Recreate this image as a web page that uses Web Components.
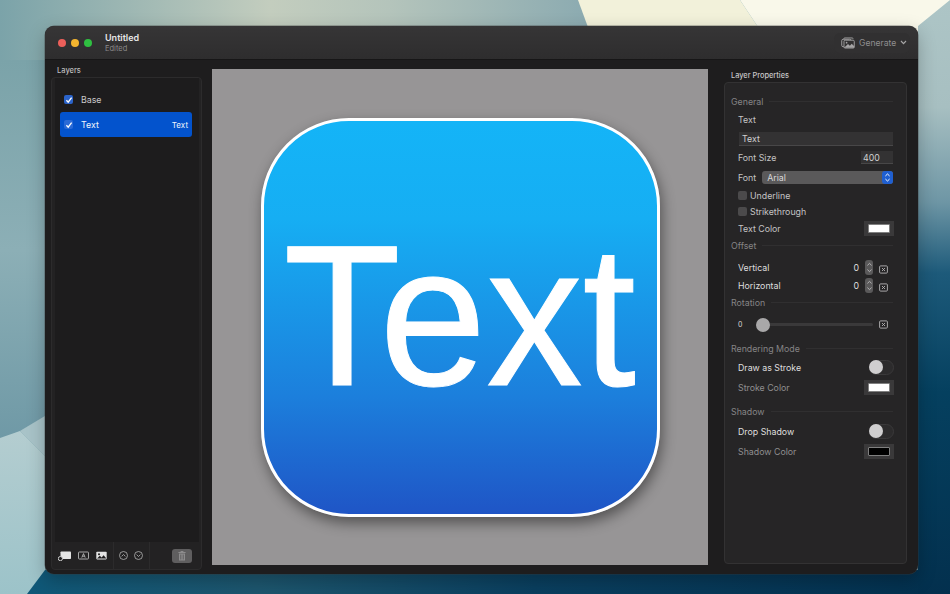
<!DOCTYPE html>
<html>
<head>
<meta charset="utf-8">
<title>Icon Generator</title>
<style>
    html, body {
        margin: 0;
        height: 100%;
        overflow: hidden;
    }
    body {
        font-family: Inter, "Liberation Sans", sans-serif;
    }
</style>
</head>
<body>
<desk-top>
    <app-window>
        <title-bar slot="title"></title-bar>
        <layers-panel slot="left">
            <layer-row checked>Base</layer-row>
            <layer-row checked selected tag="Text">Text</layer-row>
        </layers-panel>
        <icon-canvas slot="center"></icon-canvas>
        <props-panel slot="right"></props-panel>
    </app-window>
</desk-top>

<script>
// Wallpaper, the window sits on it like on a real desktop
class DeskTop extends HTMLElement {
    constructor() {
        super();
        this.attachShadow({ mode: "open" });
    }

    connectedCallback() {
        this.shadowRoot.innerHTML = `
        <style>
            :host {
                display: block;
                position: relative;
                width: 950px;
                height: 594px;
                overflow: hidden;
                background: #0a3e5e;
            }
            svg {
                position: absolute;
                inset: 0;
            }
            ::slotted(app-window) {
                position: absolute;
                left: 45px;
                top: 26px;
            }
        </style>
        <svg width="950" height="594" viewBox="0 0 950 594">
            <defs>
                <linearGradient id="top" x1="0" x2="600" y1="0" y2="0" gradientUnits="userSpaceOnUse">
                    <stop offset="0" stop-color="#7ba3a9"/>
                    <stop offset="0.45" stop-color="#c3cdbe"/>
                    <stop offset="0.65" stop-color="#b4c4bb"/>
                    <stop offset="1" stop-color="#89a9b0"/>
                </linearGradient>
                <linearGradient id="right" x1="0" x2="0" y1="0" y2="1">
                    <stop offset="0" stop-color="#adc5c6"/>
                    <stop offset="0.18" stop-color="#a7bfc1"/>
                    <stop offset="0.34" stop-color="#6e96a5"/>
                    <stop offset="0.46" stop-color="#1d5a7a"/>
                    <stop offset="0.66" stop-color="#05405f"/>
                    <stop offset="1" stop-color="#03304e"/>
                </linearGradient>
                <linearGradient id="left" x1="0" x2="0" y1="0" y2="1">
                    <stop offset="0" stop-color="#7ba3a9"/>
                    <stop offset="0.5" stop-color="#8cafb6"/>
                    <stop offset="1" stop-color="#6f99a6"/>
                </linearGradient>
                <linearGradient id="pale" x1="0" x2="0" y1="0" y2="1">
                    <stop offset="0" stop-color="#b4cdd0"/>
                    <stop offset="1" stop-color="#9cc3c9"/>
                </linearGradient>
                <linearGradient id="bottom" x1="0" x2="1" y1="0" y2="0">
                    <stop offset="0" stop-color="#0f5878"/>
                    <stop offset="0.25" stop-color="#1d566e"/>
                    <stop offset="0.55" stop-color="#0a3f5f"/>
                    <stop offset="1" stop-color="#03304e"/>
                </linearGradient>
            </defs>
            <rect width="950" height="594" fill="url(#left)"/>
            <rect width="600" height="60" fill="url(#top)"/>
            <path d="M0 60V440L20 431L45 416V60Z" fill="url(#left)"/>
            <path d="M0 438L20 431L45 456V594H0Z" fill="url(#pale)"/>
            <path d="M20 431L45 416V456Z" fill="#a8c3c8"/>
            <path d="M27 594L45 570H950V594Z" fill="url(#bottom)"/>
            <rect x="918" y="0" width="32" height="594" fill="url(#right)"/>
            <path d="M578 0H740L780 60H600Z" fill="#f2f1da"/>
            <path d="M740 0H950L918 26V60H780Z" fill="#f9f8ea"/>
        </svg>
        <slot></slot>
        `;
    }
}

class AppWindow extends HTMLElement {
    constructor() {
        super();
        this.attachShadow({ mode: "open" });
    }

    connectedCallback() {
        this.shadowRoot.innerHTML = `
        <style>
            :host {
                display: flex;
                flex-direction: column;
                width: 873px;
                height: 548px;
                border-radius: 9px;
                overflow: hidden;
                background: #1e1d1e;
                box-shadow: 0 0 0 0.5px rgba(60, 60, 60, 0.6), 0 6px 18px rgba(0, 0, 0, 0.25);
            }
            .body {
                flex: 1;
                display: flex;
                min-height: 0;
            }
        </style>
        <slot name="title"></slot>
        <div class="body">
            <slot name="left"></slot>
            <slot name="center"></slot>
            <slot name="right"></slot>
        </div>
        `;
    }
}

class TitleBar extends HTMLElement {
    constructor() {
        super();
        this.attachShadow({ mode: "open" });
    }

    connectedCallback() {
        this.shadowRoot.innerHTML = `
        <style>
            :host {
                display: flex;
                align-items: center;
                height: 34px;
                padding: 0 8px 0 13px;
                flex: none;
                background: linear-gradient(180deg, #363536, #2e2d2e);
                border-bottom: 1px solid #171617;
                box-sizing: border-box;
            }
            .lights {
                display: flex;
                gap: 5px;
            }
            .lights i {
                width: 8px;
                height: 8px;
                border-radius: 50%;
            }
            .doc {
                margin-left: 13px;
                display: flex;
                flex-direction: column;
                line-height: 11px;
                padding-top: 1px;
            }
            .doc b {
                font-size: 9px;
                font-weight: 600;
                color: #e6e6e6;
            }
            .doc span {
                font-size: 7.5px;
                color: #8b8a8b;
            }
            .generate {
                margin-left: auto;
                display: flex;
                align-items: center;
                gap: 4px;
                height: 20px;
                width: 76px;
                box-sizing: border-box;
                padding: 0 5px 0 7px;
                border-radius: 6px;
                background: #313031;
                color: #8f8e8f;
                font-size: 8.6px;
            }
            .generate svg {
                flex: none;
            }
        </style>
        <div class="lights">
            <i style="background:#ec5f5a"></i>
            <i style="background:#f4b52f"></i>
            <i style="background:#2fc041"></i>
        </div>
        <div class="doc"><b>Untitled</b><span>Edited</span></div>
        <div class="generate">
            <svg width="14" height="12" viewBox="0 0 15 12" fill="none" stroke="#a5a4a5" stroke-width="1">
                <rect x="0.8" y="2" width="10" height="8" rx="1.5"/>
                <path d="M3 2V1.5A1 1 0 0 1 4 .6H12A1 1 0 0 1 13 1.5" />
                <rect x="3.2" y="3" width="11" height="8.4" rx="1.2" fill="#313031"/>
                <circle cx="6" cy="5.6" r="0.9" fill="#a5a4a5" stroke="none"/>
                <path d="M3.6 10.8L7.5 7L9.5 9L11.5 6.8L14.2 9.6V11.2H3.6Z" fill="#a5a4a5" stroke="none"/>
            </svg>
            <span>Generate</span>
            <svg width="7" height="5" viewBox="0 0 7 5" fill="none" stroke="#a5a4a5" stroke-width="1.2"><path d="M1 1L3.5 3.6L6 1"/></svg>
        </div>
        `;
    }
}

class LayerRow extends HTMLElement {
    constructor() {
        super();
        this.attachShadow({ mode: "open" });
    }

    connectedCallback() {
        const tag = this.getAttribute("tag") || "";
        const sel = this.hasAttribute("selected");
        this.shadowRoot.innerHTML = `
        <style>
            :host {
                display: flex;
                align-items: center;
                height: 25px;
                padding: 0 4px;
                border-radius: 3px;
                font-size: 8.8px;
                color: ${sel ? "#f0f4fb" : "#c9c8c9"};
                background: ${sel ? "#0353cd" : "transparent"};
            }
            .box {
                width: 9px;
                height: 9px;
                border-radius: 2px;
                background: ${sel ? "#2a6ad6" : "#2b63c9"};
                display: flex;
                align-items: center;
                justify-content: center;
                margin-right: 8px;
            }
            .tag {
                margin-left: auto;
                font-size: 8px;
            }
        </style>
        <span class="box">
            <svg width="8" height="8" viewBox="0 0 8 8" fill="none" stroke="#fff" stroke-width="1.3"><path d="M1.4 4.2L3.2 6.2L6.6 1.6"/></svg>
        </span>
        <span><slot></slot></span>
        <span class="tag">${tag}</span>
        `;
    }
}

class LayersPanel extends HTMLElement {
    constructor() {
        super();
        this.attachShadow({ mode: "open" });
    }

    connectedCallback() {
        this.shadowRoot.innerHTML = `
        <style>
            :host {
                display: flex;
                flex-direction: column;
                width: 151px;
                height: 100%;
                margin-left: 6px;
                flex: none;
            }
            h2 {
                margin: 0;
                height: 17px;
                padding-left: 6px;
                font-size: 7.5px;
                line-height: 21px;
                font-weight: 500;
                color: #bdbcbd;
            }
            .box {
                flex: 1;
                margin-bottom: 4px;
                display: flex;
                flex-direction: column;
                border: 1px solid #2c2b2c;
                border-radius: 4px;
                background: #232223;
            }
            .rows {
                flex: 1;
                padding: 9px 7px 9px 5px;
                margin: 0 2px 0 3px;
                background: #1d1c1d;
            }
            .bar {
                display: flex;
                align-items: center;
                height: 27px;
                padding: 0 0 0 6px;
            }
            .bar svg {
                display: block;
            }
            .group {
                display: flex;
                align-items: center;
                height: 100%;
                gap: 7px;
            }
            .group.arrows {
                gap: 6px;
            }
            .sep {
                width: 1px;
                height: 100%;
                background: #2c2b2c;
                margin: 0 5px 0 6px;
            }
            .trash {
                margin-left: 17px;
                width: 20px;
                height: 14px;
                border-radius: 3px;
                background: #5f5e5f;
                display: flex;
                align-items: center;
                justify-content: center;
            }
        </style>
        <h2>Layers</h2>
        <div class="box">
            <div class="rows"><slot></slot></div>
            <div class="bar">
                <div class="group">
                    <svg width="13" height="10" viewBox="0 0 13 10"><rect x="2.5" y="0.5" width="10.5" height="7.6" rx="0.8" fill="#e4e4e4"/><circle cx="2.4" cy="7.6" r="2.1" fill="#1e1d1e" stroke="#cfcfcf" stroke-width="1"/></svg>
                    <svg width="11" height="9" viewBox="0 0 11 9" fill="none" stroke="#c6c6c6" stroke-width="0.8"><rect x="0.5" y="1" width="10" height="7" rx="0.8"/><path d="M3.8 6.6L5.5 2.6L7.2 6.6M4.5 5.2H6.5"/></svg>
                    <svg width="11" height="9" viewBox="0 0 11 9"><rect x="0.3" y="0.8" width="10.4" height="7.6" rx="0.8" fill="#e4e4e4"/><circle cx="3" cy="3.2" r="1" fill="#1e1d1e"/><path d="M1 7.6L3.8 4.8L5.6 6.4L7.6 4.2L10 7V7.6Z" fill="#1e1d1e"/></svg>
                </div>
                <div class="sep"></div>
                <div class="group arrows">
                    <svg width="9" height="9" viewBox="0 0 9 9" fill="none" stroke="#b4b4b4" stroke-width="0.8"><circle cx="4.5" cy="4.5" r="4"/><path d="M2.6 5.4L4.5 3.5L6.4 5.4"/></svg>
                    <svg width="9" height="9" viewBox="0 0 9 9" fill="none" stroke="#b4b4b4" stroke-width="0.8"><circle cx="4.5" cy="4.5" r="4"/><path d="M2.6 3.6L4.5 5.5L6.4 3.6"/></svg>
                </div>
                <div class="sep"></div>
                <div class="trash">
                    <svg width="8" height="10" viewBox="0 0 8 10" fill="#8d8c8d"><rect x="2.6" y="0" width="2.8" height="1.2"/><rect x="0.4" y="1" width="7.2" height="1"/><path d="M1 2.6H7V9.4H1ZM2.2 3.4V8.6H2.9V3.4ZM3.7 3.4V8.6H4.3V3.4ZM5.1 3.4V8.6H5.8V3.4Z" fill-rule="evenodd"/></svg>
                </div>
            </div>
        </div>
        `;
    }
}

class IconCanvas extends HTMLElement {
    constructor() {
        super();
        this.attachShadow({ mode: "open" });
    }

    connectedCallback() {
        this.shadowRoot.innerHTML = `
        <style>
            :host {
                display: flex;
                align-items: center;
                justify-content: center;
                width: 496px;
                height: 496px;
                margin: 9px 16px 0 10px;
                flex: none;
                background: #979596;
            }
            .icon {
                width: 399px;
                height: 399px;
                box-sizing: border-box;
                border: 3px solid #fff;
                border-radius: 88px;
                background: linear-gradient(180deg, #14b4f7 0%, #16aef3 25%, #1c7fdc 70%, #1f55c6 100%);
                box-shadow: 2px 6px 14px rgba(0, 0, 0, 0.45);
                display: flex;
                align-items: center;
                justify-content: center;
                color: #fff;
                font: 197px/1 "Liberation Sans", Arial, sans-serif;
                font-kerning: normal;
            }
            span {
                display: block;
                transform: translateY(-1.5px) scale(0.975, 1.015);
                -webkit-text-stroke: 1px #fff;
            }
        </style>
        <div class="icon"><span>Text</span></div>
        `;
    }
}

class PropRow extends HTMLElement {
    constructor() {
        super();
        this.attachShadow({ mode: "open" });
    }

    connectedCallback() {
        const h = this.getAttribute("h") || 14;
        const m = this.getAttribute("m") || 0;
        this.shadowRoot.innerHTML = `
        <style>
            :host {
                display: flex;
                align-items: center;
                justify-content: space-between;
                height: ${h}px;
                margin-top: ${m}px;
                padding: 0 13px 0 13px;
                font-size: 8.8px;
                color: #c4c3c4;
            }
            :host([dim]) {
                color: #8f8e8f;
            }
            :host([strong]) {
                color: #dfdedf;
            }
        </style>
        <slot></slot>
        `;
    }
}

class PropHead extends HTMLElement {
    constructor() {
        super();
        this.attachShadow({ mode: "open" });
    }

    connectedCallback() {
        this.shadowRoot.innerHTML = `
        <style>
            :host {
                display: flex;
                align-items: center;
                gap: 6px;
                height: 14px;
                margin-top: ${this.getAttribute("m") || 0}px;
                padding: 0 13px 0 6px;
                font-size: 8.8px;
                color: #858485;
            }
            i {
                flex: 1;
                height: 1px;
                background: #302f30;
            }
        </style>
        <slot></slot><i></i>
        `;
    }
}

class ColorWell extends HTMLElement {
    constructor() {
        super();
        this.attachShadow({ mode: "open" });
    }

    connectedCallback() {
        this.shadowRoot.innerHTML = `
        <style>
            :host {
                display: block;
                width: 30px;
                height: 15px;
                box-sizing: border-box;
                padding: 3px 4px;
                background: #3a393a;
                margin-right: -1px;
            }
            div {
                height: 100%;
                box-sizing: border-box;
                border: 1px solid #808080;
                border-radius: 1px;
                background: ${this.getAttribute("color") || "#fff"};
            }
        </style>
        <div></div>
        `;
    }
}

class ToggleSwitch extends HTMLElement {
    constructor() {
        super();
        this.attachShadow({ mode: "open" });
    }

    connectedCallback() {
        this.shadowRoot.innerHTML = `
        <style>
            :host {
                display: block;
                width: 25px;
                height: 15px;
                box-sizing: border-box;
                margin-right: -1px;
                border-radius: 8px;
                background: #2c2b2c;
                border: 1px solid #3a393a;
                position: relative;
            }
            i {
                position: absolute;
                left: -1px;
                top: -1px;
                width: 14px;
                height: 14px;
                border-radius: 50%;
                background: #cfcecf;
            }
        </style>
        <i></i>
        `;
    }
}

class ClearButton extends HTMLElement {
    constructor() {
        super();
        this.attachShadow({ mode: "open" });
    }

    connectedCallback() {
        this.shadowRoot.innerHTML = `
        <style>
            :host {
                display: block;
                line-height: 0;
                margin-top: 3px;
            }
            :host([flat]) {
                margin-top: 0;
            }
        </style>
        <svg width="9" height="9" viewBox="0 0 9 9" fill="none" stroke="#b5b4b5" stroke-width="0.9"><rect x="0.6" y="0.9" width="7.8" height="7.2" rx="1"/><path d="M3 3L6 6M6 3L3 6"/></svg>
        `;
    }
}

class StepperControl extends HTMLElement {
    constructor() {
        super();
        this.attachShadow({ mode: "open" });
    }

    connectedCallback() {
        this.shadowRoot.innerHTML = `
        <style>
            :host {
                display: flex;
                align-items: center;
                justify-content: center;
                width: 8px;
                height: 15px;
                border-radius: 3px;
                background: #5a595a;
            }
        </style>
        <svg width="7" height="13" viewBox="0 0 7 13" fill="none" stroke="#bdbcbd" stroke-width="0.9"><path d="M1.4 4.4L3.5 2.4L5.6 4.4M1.4 8.6L3.5 10.6L5.6 8.6"/></svg>
        `;
    }
}

class PropsPanel extends HTMLElement {
    constructor() {
        super();
        this.attachShadow({ mode: "open" });
    }

    connectedCallback() {
        this.shadowRoot.innerHTML = `
        <style>
            :host {
                display: flex;
                flex-direction: column;
                width: 183px;
                height: 100%;
                flex: none;
            }
            h2 {
                margin: 0;
                height: 22px;
                padding-left: 7px;
                font-size: 7.4px;
                line-height: 31px;
                font-weight: 500;
                color: #c8c7c8;
            }
            .box {
                flex: 1;
                margin-bottom: 10px;
                box-sizing: border-box;
                padding-top: 11.5px;
                border: 1px solid #333233;
                border-radius: 4px;
                background: #262526;
            }
            .input {
                flex: 1;
                height: 13px;
                line-height: 13px;
                padding-left: 3px;
                background: #333233;
                border-bottom: 1px solid #484748;
                margin-left: 1px;
                color: #d0cfd0;
            }
            .small {
                flex: none;
                width: 32px;
                padding: 0 0 0 2px;
                box-sizing: border-box;
            }
            .select {
                flex: 1;
                height: 13px;
                margin: 0 0 0 6px;
                border-radius: 3px;
                background: #5a595a;
                display: flex;
                align-items: center;
                justify-content: space-between;
                padding-left: 5px;
                font-size: 8.8px;
                color: #d8d7d8;
            }
            .select b {
                width: 11px;
                height: 13px;
                border-radius: 3px;
                background: #1f5fd0;
                display: flex;
                align-items: center;
                justify-content: center;
            }
            .check {
                display: flex;
                align-items: center;
                gap: 3px;
                padding-top: 1px;
            }
            .check i {
                width: 9px;
                height: 9px;
                border-radius: 2px;
                background: #4b4a4b;
            }
            .right {
                display: flex;
                align-items: center;
                gap: 6px;
                margin-right: 5px;
            }
            .slider {
                flex: 1;
                display: flex;
                align-items: center;
                margin: 0 6px 0 14px;
                position: relative;
                height: 14px;
            }
            .slider::before {
                content: "";
                flex: 1;
                height: 3px;
                border-radius: 2px;
                background: #3a393a;
            }
            .slider i {
                position: absolute;
                left: 0;
                top: 0;
                width: 14px;
                height: 14px;
                border-radius: 50%;
                background: #a9a8a9;
            }
            .zero {
                font-size: 7px;
                color: #d8d7d8;
            }
        </style>
        <h2>Layer Properties</h2>
        <div class="box">
            <prop-head>General</prop-head>
            <prop-row h="16" m="3">Text</prop-row>
            <prop-row h="13" m="5"><div class="input">Text</div></prop-row>
            <prop-row h="13" m="5"><span>Font Size</span><div class="input small">400</div></prop-row>
            <prop-row h="13" m="7"><span>Font</span><div class="select"><span>Arial</span><b><svg width="7" height="11" viewBox="0 0 7 11" fill="none" stroke="#fff" stroke-width="1"><path d="M1.4 4L3.5 2L5.6 4M1.4 7L3.5 9L5.6 7"/></svg></b></div></prop-row>
            <prop-row h="14" m="4"><span class="check"><i></i>Underline</span></prop-row>
            <prop-row h="14" m="2"><span class="check"><i></i>Strikethrough</span></prop-row>
            <prop-row h="15" m="3"><span>Text Color</span><color-well color="#fff"></color-well></prop-row>
            <prop-head m="3">Offset</prop-head>
            <prop-row h="14" m="8" strong><span>Vertical</span><div class="right"><span>0</span><stepper-control></stepper-control><clear-button></clear-button></div></prop-row>
            <prop-row h="14" m="4" strong><span>Horizontal</span><div class="right"><span>0</span><stepper-control></stepper-control><clear-button></clear-button></div></prop-row>
            <prop-head m="3">Rotation</prop-head>
            <prop-row h="14" m="8"><span class="zero">0</span><div class="slider"><i></i></div><clear-button flat style="margin-right:5px"></clear-button></prop-row>
            <prop-head m="10">Rendering Mode</prop-head>
            <prop-row h="16" m="4" strong><span>Draw as Stroke</span><toggle-switch></toggle-switch></prop-row>
            <prop-row h="16" m="4" dim><span>Stroke Color</span><color-well color="#fff"></color-well></prop-row>
            <prop-head m="9">Shadow</prop-head>
            <prop-row h="16" m="5" strong><span>Drop Shadow</span><toggle-switch></toggle-switch></prop-row>
            <prop-row h="16" m="4" dim><span>Shadow Color</span><color-well color="#000"></color-well></prop-row>
        </div>
        `;
    }
}

customElements.define("prop-row", PropRow);
customElements.define("prop-head", PropHead);
customElements.define("color-well", ColorWell);
customElements.define("toggle-switch", ToggleSwitch);
customElements.define("clear-button", ClearButton);
customElements.define("stepper-control", StepperControl);
customElements.define("props-panel", PropsPanel);
customElements.define("icon-canvas", IconCanvas);
customElements.define("layer-row", LayerRow);
customElements.define("layers-panel", LayersPanel);
customElements.define("title-bar", TitleBar);
customElements.define("app-window", AppWindow);
customElements.define("desk-top", DeskTop);
</script>
</body>
</html>
